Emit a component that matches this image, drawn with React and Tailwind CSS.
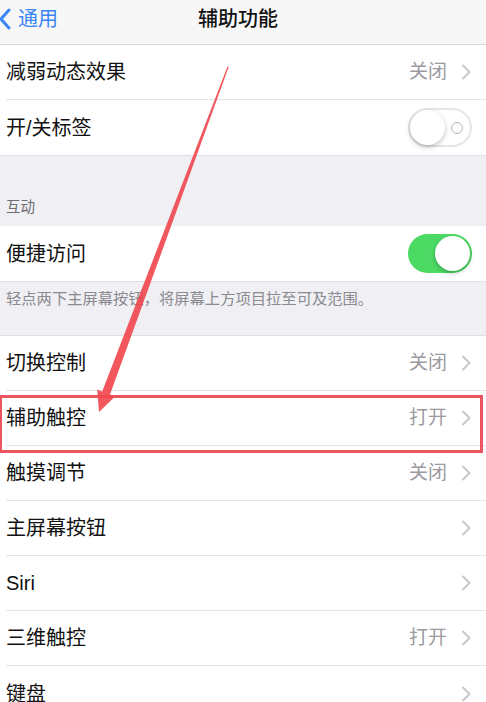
import React from 'react';

const font = "font-['Liberation_Sans','Noto_Sans_CJK_SC',sans-serif]";

function Chevron() {
  return (
    <svg width="10" height="16" viewBox="0 0 10 16" className="ml-[14px] shrink-0">
      <path d="M2 1.5 L8.5 8 L2 14.5" fill="none" stroke="#c7c7cc" strokeWidth="2" strokeLinecap="round" strokeLinejoin="round" />
    </svg>
  );
}

function Row({ label, value, chevron = true, children, last = false }) {
  return (
    <div className="flex h-[55px] pl-[6px] bg-white">
      <div className={`flex flex-1 items-center pr-[15px] ${last ? '' : 'border-b border-[#e4e4e8]'}`}>
        <span className="flex-1 text-[20px] text-[#111]">{label}</span>
        {value && <span className="text-[19px] text-[#9a9a9f]">{value}</span>}
        {children}
        {chevron && <Chevron />}
      </div>
    </div>
  );
}

function Toggle({ on }) {
  if (on) {
    return (
      <div className="mr-[-1px] flex h-[39px] w-[64px] items-center justify-end rounded-full bg-[#4cd964] px-[2px]">
        <div className="h-[35px] w-[35px] rounded-full bg-white shadow-[0_2px_4px_rgba(0,0,0,0.25)]" />
      </div>
    );
  }
  return (
    <div className="mr-[-1px] flex h-[39px] w-[64px] items-center rounded-full border-2 border-[#e6e6ea] bg-white">
      <div className="h-[35px] w-[35px] rounded-full bg-white shadow-[0_2px_5px_rgba(0,0,0,0.25)]" />
      <div className="ml-[6px] h-[12px] w-[12px] rounded-full border-[1.5px] border-[#b3b3b8]" />
    </div>
  );
}

export default function App() {
  return (
    <div className={`relative w-[486px] h-[702px] overflow-hidden bg-[#efeff4] ${font}`}>
      {/* Nav bar */}
      <div className="grid h-[45px] grid-cols-[1fr_auto_1fr] items-center border-b border-[#d6d6da] bg-[#f7f7f7] pb-[7px] pr-[10px]">
        <div className="flex items-center text-[#3b86f6]">
          <svg width="14" height="22" viewBox="0 0 14 22" className="ml-[-2px]">
            <path d="M11 2 L3 11 L11 20" fill="none" stroke="#3b86f6" strokeWidth="3" strokeLinecap="round" strokeLinejoin="round" />
          </svg>
          <span className="ml-[6px] text-[20px]">通用</span>
        </div>
        <div className="text-[20px] font-medium text-[#111]">辅助功能</div>
        <div />
      </div>

      <Row label="减弱动态效果" value="关闭" />
      <Row label="开/关标签" chevron={false} last>
        <Toggle on={false} />
      </Row>

      <div className="flex h-[71px] items-end border-t border-[#e0e0e4] pb-[7px] pl-[6px] text-[14.5px] text-[#6d6d72]">
        互动
      </div>

      <Row label="便捷访问" chevron={false} last>
        <Toggle on />
      </Row>

      <div className="h-[54px] border-t border-[#e0e0e4] pl-[6px] pt-[6px] text-[15.3px] text-[#8a8a8f]">
        轻点两下主屏幕按钮，将屏幕上方项目拉至可及范围。
      </div>

      <div className="border-t border-[#e0e0e4]">
        <Row label="切换控制" value="关闭" />
        <Row label="辅助触控" value="打开" />
        <Row label="触摸调节" value="关闭" />
        <Row label="主屏幕按钮" />
        <Row label="Siri" />
        <Row label="三维触控" value="打开" />
        <Row label="键盘" last />
      </div>

      {/* highlight box */}
      <div className="pointer-events-none absolute left-[-1px] top-[395px] h-[58px] w-[484px] border-[3px] border-[#ea5560]" />

      {/* arrow */}
      <svg className="pointer-events-none absolute left-0 top-0" width="486" height="702" viewBox="0 0 486 702">
        <polygon
          points="227.5,66.5 228.7,67 110,394.6 115,396.6 99,412 97.2,389.5 102.2,391.6"
          fill="#f0494f"
          opacity="0.92"
        />
      </svg>
    </div>
  );
}
